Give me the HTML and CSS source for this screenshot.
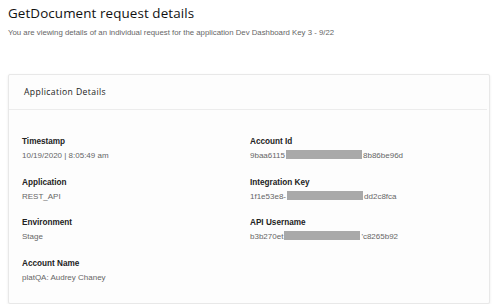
FILE: index.html
```html
<!DOCTYPE html>
<html lang="en">

<head>
  <meta charset="UTF-8">
  <meta name="viewport" content="width=device-width, initial-scale=1.0">
  <title>Request details</title>
  <link rel="stylesheet" href="styles.css">
</head>

<body>
  <div class="page">
    <h1 class="heading">GetDocument request details</h1>
    <p class="subheading">You are viewing details of an individual request for the application Dev Dashboard Key 3 - 9/22</p>

    <div class="card">
      <div class="card-header">Application Details</div>
      <div class="card-body">
        <div class="column left">
          <div class="field">
            <div class="label">Timestamp</div>
            <div class="value">10/19/2020 | 8:05:49 am</div>
          </div>
          <div class="field">
            <div class="label">Application</div>
            <div class="value">REST_API</div>
          </div>
          <div class="field">
            <div class="label">Environment</div>
            <div class="value">Stage</div>
          </div>
          <div class="field">
            <div class="label">Account Name</div>
            <div class="value">platQA: Audrey Chaney</div>
          </div>
        </div>
        <div class="column">
          <div class="field">
            <div class="label">Account Id</div>
            <div class="value">9baa6115<span class="redact"></span>8b86be96d</div>
          </div>
          <div class="field">
            <div class="label">Integration Key</div>
            <div class="value">1f1e53e8-<span class="redact"></span>dd2c8fca</div>
          </div>
          <div class="field">
            <div class="label">API Username</div>
            <div class="value">b3b270et<span class="redact"></span>'c8265b92</div>
          </div>
        </div>
      </div>
    </div>
  </div>
</body>

</html>
```

FILE: styles.css
```css
body {
  margin: 0;
  padding: 0;
  background: #fff;
  font-family: 'Liberation Sans', Arial, sans-serif;
}

.page {
  padding: 3px 10px 0 8px;
}

.heading {
  font-family: 'Open Sans', sans-serif;
  font-size: 13.4px;
  font-weight: 500;
  letter-spacing: 0.1px;
  line-height: 20px;
  color: #111;
  margin: 0;
}

.subheading {
  font-size: 7.8px;
  line-height: 12px;
  color: #666;
  margin: 4px 0 0 0;
}

.card {
  margin-top: 35px;
  border: 1px solid #e8e8e8;
  border-radius: 2px;
  background: #fdfdfd;
  box-shadow: 0 1px 3px rgba(0, 0, 0, 0.08);
}

.card-header {
  height: 34px;
  line-height: 34px;
  padding: 0 15px;
  font-family: 'Open Sans', sans-serif;
  font-size: 8.6px;
  letter-spacing: 0.4px;
  color: #222;
  border-bottom: 1px solid #ececec;
  margin-right: 2px;
}

.card-body {
  display: flex;
  padding: 26px 13px 19px 13px;
}

.column {
  display: flex;
  flex-direction: column;
  gap: 14.5px;
}

.column.left {
  width: 228px;
}

.label {
  font-size: 8.2px;
  font-weight: bold;
  line-height: 12px;
  color: #222;
}

.value {
  font-size: 8px;
  line-height: 12px;
  margin-top: 2px;
  color: #666;
}

.redact {
  display: inline-block;
  width: 76px;
  height: 9px;
  margin: 0 1px;
  vertical-align: -1px;
  background: #a9a9a9;
}
```
